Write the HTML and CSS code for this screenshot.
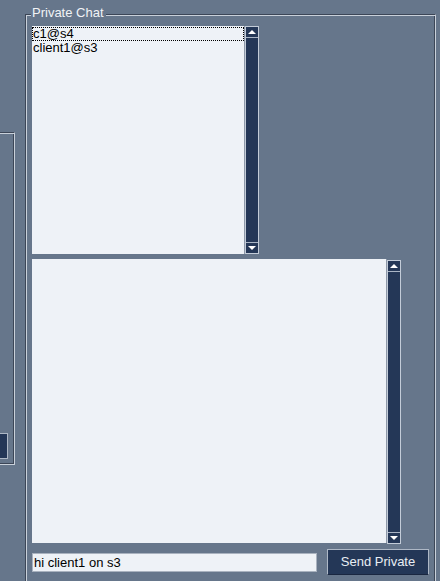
FILE: index.html
```
<!DOCTYPE html>
<html>
<head>
<meta charset="utf-8">
<link rel="stylesheet" href="styles.css">
</head>
<body>
<div class="root">
  <div class="side">
    <div class="side-btn"></div>
  </div>
  <div class="group">
    <span class="legend">Private Chat</span>
    <div class="row row-list">
      <div class="listbox">
        <div class="item focus">c1@s4</div>
        <div class="item">client1@s3</div>
      </div>
      <div class="sb">
        <div class="arr up"><span class="tri-up"></span></div>
        <div class="trough"></div>
        <div class="arr down"><span class="tri-down"></span></div>
      </div>
    </div>
    <div class="row row-text">
      <div class="textarea"></div>
      <div class="sb">
        <div class="arr up"><span class="tri-up"></span></div>
        <div class="trough"></div>
        <div class="arr down"><span class="tri-down"></span></div>
      </div>
    </div>
    <div class="row row-send">
      <div class="entry">hi client1 on s3</div>
      <div class="btn">Send Private</div>
    </div>
  </div>
</div>
</body>
</html>
```
FILE: styles.css
```
html, body {
  margin: 0;
  padding: 0;
}
body {
  background: #66768b;
  width: 440px;
  height: 581px;
  overflow: hidden;
  font-family: "Liberation Sans", Arial, sans-serif;
  font-size: 13px;
  color: #000;
}
.root {
  display: flex;
  align-items: flex-start;
  height: 581px;
  overflow: hidden;
}
.side {
  box-sizing: border-box;
  width: 115px;
  margin-left: -100px;
  margin-top: 132px;
  height: 333px;
  border: 1px solid;
  border-color: #3c4657 #c9d0da #c9d0da #3c4657;
  box-shadow: inset 1px 1px 0 #c9d0da, inset -1px -1px 0 #3c4657;
  display: flex;
  flex-direction: column;
  align-items: flex-end;
  padding: 0 6px 5px 0;
}
.side-btn {
  margin-top: auto;
  box-sizing: border-box;
  width: 80px;
  height: 26px;
  background: #243757;
  border: 1px solid #aeb8c6;
}
.group {
  position: relative;
  box-sizing: border-box;
  margin-left: 10px;
  margin-top: 14px;
  width: 411px;
  height: 567px;
  border: 1px solid;
  border-bottom: 0;
  border-color: #3c4657 #c9d0da #c9d0da #3c4657;
  box-shadow: inset 1px 1px 0 #c9d0da, inset -1px 0 0 #3c4657;
  padding: 11px 0 0 6px;
  display: flex;
  flex-direction: column;
}
.legend {
  position: absolute;
  left: 5px;
  top: -10px;
  padding: 0 2px 0 1px;
  line-height: 15px;
  background: #66768b;
  color: #f1f3f6;
}
.row {
  display: flex;
}
.row-list {
  height: 228px;
}
.listbox {
  box-sizing: border-box;
  width: 213px;
  height: 228px;
  background: #eef2f7;
  border-right: 1px solid #8d98a8;
  padding-top: 1px;
}
.item {
  line-height: 14px;
  padding-left: 1px;
  white-space: nowrap;
}
.item.focus {
  outline: 1px dotted #000;
  outline-offset: -1px;
}
.sb {
  box-sizing: border-box;
  width: 14px;
  border: 1px solid #c3ccd8;
  background: #243757;
  display: flex;
  flex-direction: column;
}
.arr {
  height: 10px;
  display: flex;
  align-items: center;
  justify-content: center;
}
.arr.up {
  border-bottom: 1px solid #aab5c5;
}
.arr.down {
  border-top: 1px solid #aab5c5;
}
.trough {
  flex: 1;
}
.tri-up {
  width: 0;
  height: 0;
  border-left: 4px solid transparent;
  border-right: 4px solid transparent;
  border-bottom: 4px solid #ffffff;
}
.tri-down {
  width: 0;
  height: 0;
  border-left: 4px solid transparent;
  border-right: 4px solid transparent;
  border-top: 4px solid #ffffff;
}
.row-text {
  margin-top: 5px;
  height: 284px;
}
.textarea {
  box-sizing: border-box;
  width: 355px;
  height: 284px;
  background: #eef2f7;
  border-right: 1px solid #8d98a8;
}
.row-text .sb {
  margin-top: 1px;
  height: 284px;
}
.row-send {
  margin-top: 6px;
  align-items: center;
}
.entry {
  box-sizing: border-box;
  width: 285px;
  height: 19px;
  background: #eef2f7;
  border: 1px solid #a9b2bf;
  padding-left: 1px;
  line-height: 17px;
  white-space: nowrap;
}
.btn {
  box-sizing: border-box;
  margin-left: 10px;
  width: 102px;
  height: 26px;
  background: #243757;
  border: 1px solid #aeb8c6;
  border-bottom-color: #1a2740;
  color: #e9eef4;
  line-height: 24px;
  text-align: center;
}
```
